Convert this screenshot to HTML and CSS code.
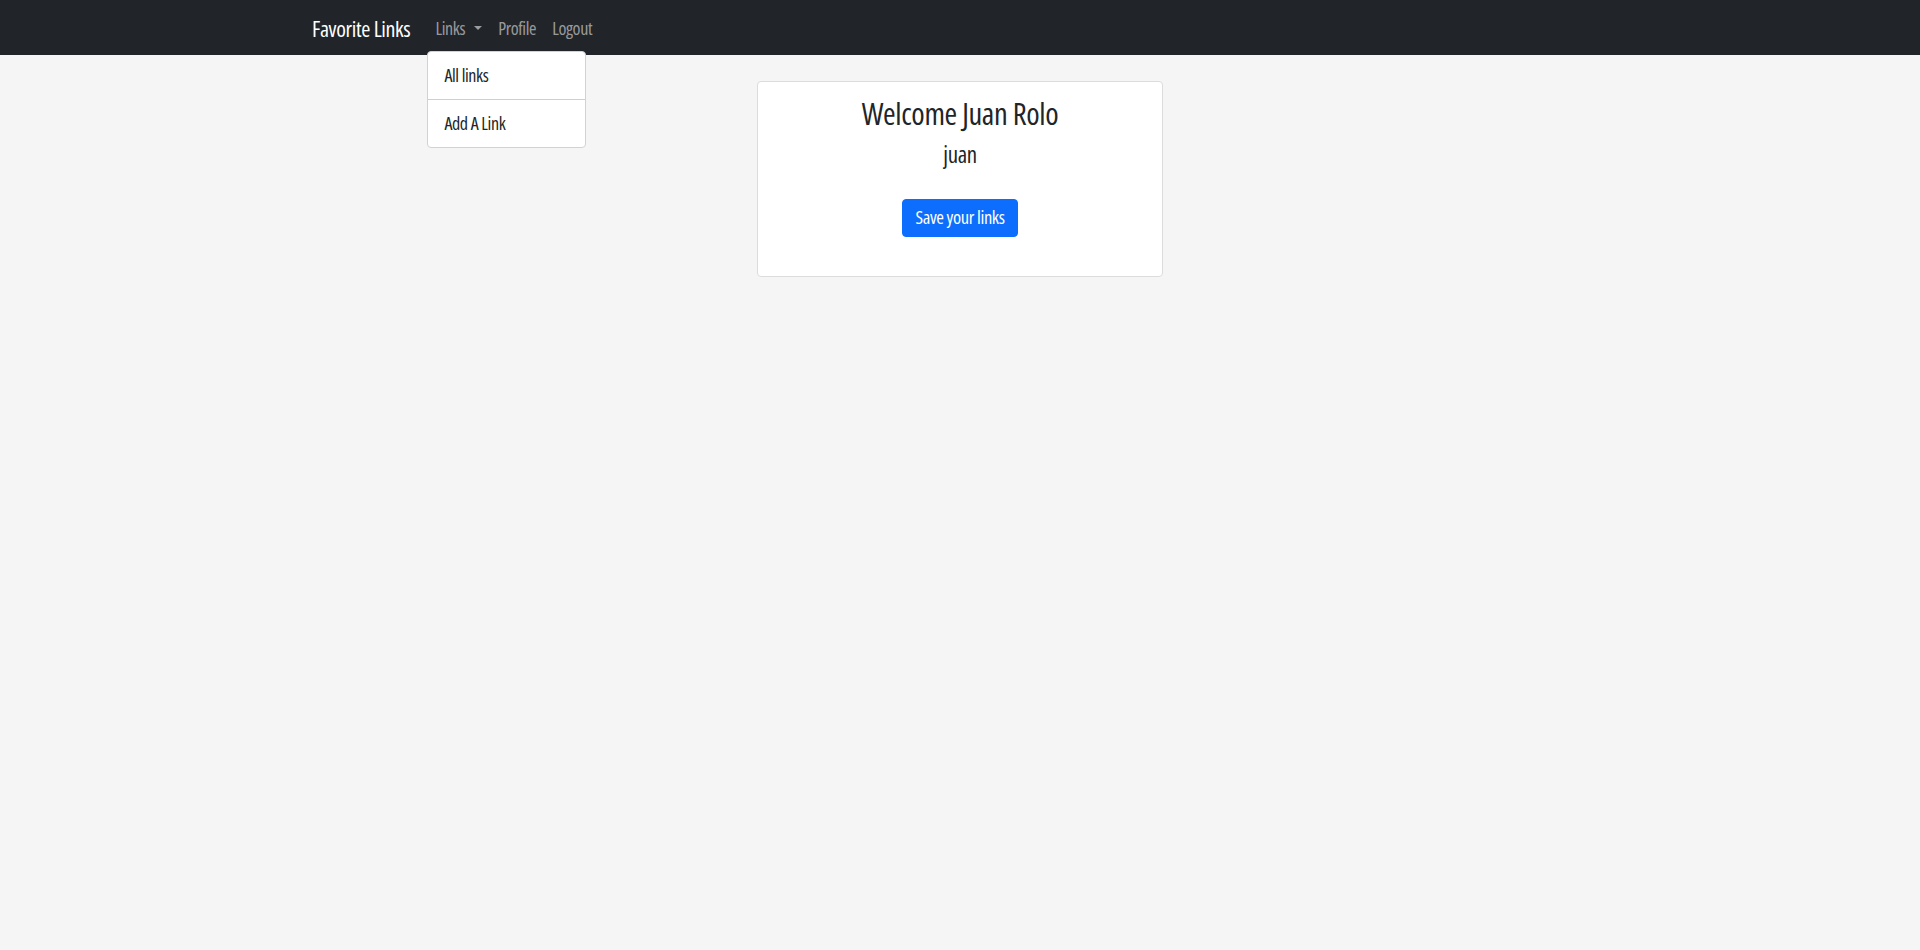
FILE: index.html
```html
<!DOCTYPE html>
<html lang="en">
<head>
<meta charset="utf-8">
<title>Favorite Links</title>
<link rel="stylesheet" href="styles.css">
</head>
<body>
<nav class="navbar">
  <div class="nav-inner">
    <a class="brand" href="#">Favorite Links</a>
    <ul class="nav">
      <li class="nav-item dropdown">
        <a class="nav-link toggle" href="#">Links</a>
        <ul class="dropdown-menu">
          <li><a class="dropdown-item" href="#">All links</a></li>
          <li><a class="dropdown-item" href="#">Add A Link</a></li>
        </ul>
      </li>
      <li class="nav-item"><a class="nav-link" href="#">Profile</a></li>
      <li class="nav-item"><a class="nav-link" href="#">Logout</a></li>
    </ul>
  </div>
</nav>
<main class="main">
  <div class="card">
    <h2 class="card-title">Welcome Juan Rolo</h2>
    <h4 class="card-sub">juan</h4>
    <a class="btn" href="#">Save your links</a>
  </div>
</main>
</body>
</html>
```

FILE: styles.css
```css
* { box-sizing: border-box; }

body {
  margin: 0;
  background: #f5f5f5;
  color: #212529;
  font-family: "Open Sans", "Roboto", sans-serif;
  font-stretch: 75%;
  font-weight: 480;
  font-size: 18px;
  letter-spacing: -0.02em;
  line-height: 1.5;
}

a { text-decoration: none; }

.navbar {
  background: #212529;
}

.nav-inner {
  max-width: 1320px;
  margin: 0 auto;
  padding: 0 12px;
  height: 55px;
  display: flex;
  align-items: center;
}

.brand {
  color: #fff;
  font-size: 22px;
  margin-right: 17px;
  line-height: 30px;
}

.nav {
  list-style: none;
  margin: 0;
  padding: 0;
  display: flex;
  align-self: stretch;
}

.nav-item {
  position: relative;
  display: flex;
  align-items: center;
}

.nav-link {
  color: rgba(255, 255, 255, 0.55);
  padding: 8px;
  line-height: 24px;
  display: block;
}

.toggle::after {
  content: "";
  display: inline-block;
  margin-left: 9px;
  vertical-align: 5px;
  border-top: 4px solid;
  border-left: 4px solid transparent;
  border-right: 4px solid transparent;
}

.dropdown-menu {
  position: absolute;
  top: 51px;
  left: 0;
  width: 159px;
  list-style: none;
  margin: 0;
  padding: 0;
  background: #fff;
  border: 1px solid #d2d2d2;
  border-radius: 4px;
  z-index: 10;
}

.dropdown-menu li + li {
  border-top: 1px solid #cfcfcf;
}

.dropdown-item {
  display: block;
  color: #212529;
  padding: 11px 16px 12px;
  line-height: 24px;
}

.main {
  padding-top: 26px;
}

.card {
  width: 406px;
  margin: 0 auto;
  background: #fff;
  border: 1px solid #dcdcdc;
  border-radius: 4px;
  text-align: center;
  padding: 12px 16px 39px;
}

.card-title {
  margin: 0;
  font-size: 30.5px;
  font-weight: 480;
  line-height: 38px;
}

.card-sub {
  margin: 8px 0 0;
  font-size: 23px;
  font-weight: 500;
  line-height: 28px;
}

.btn {
  display: inline-block;
  margin-top: 31px;
  background: #0d6efd;
  color: #fff;
  border: 1px solid #0d6efd;
  border-radius: 4px;
  padding: 5px 12px 7px;
  line-height: 24px;
  font-size: 18.5px;
}
```
